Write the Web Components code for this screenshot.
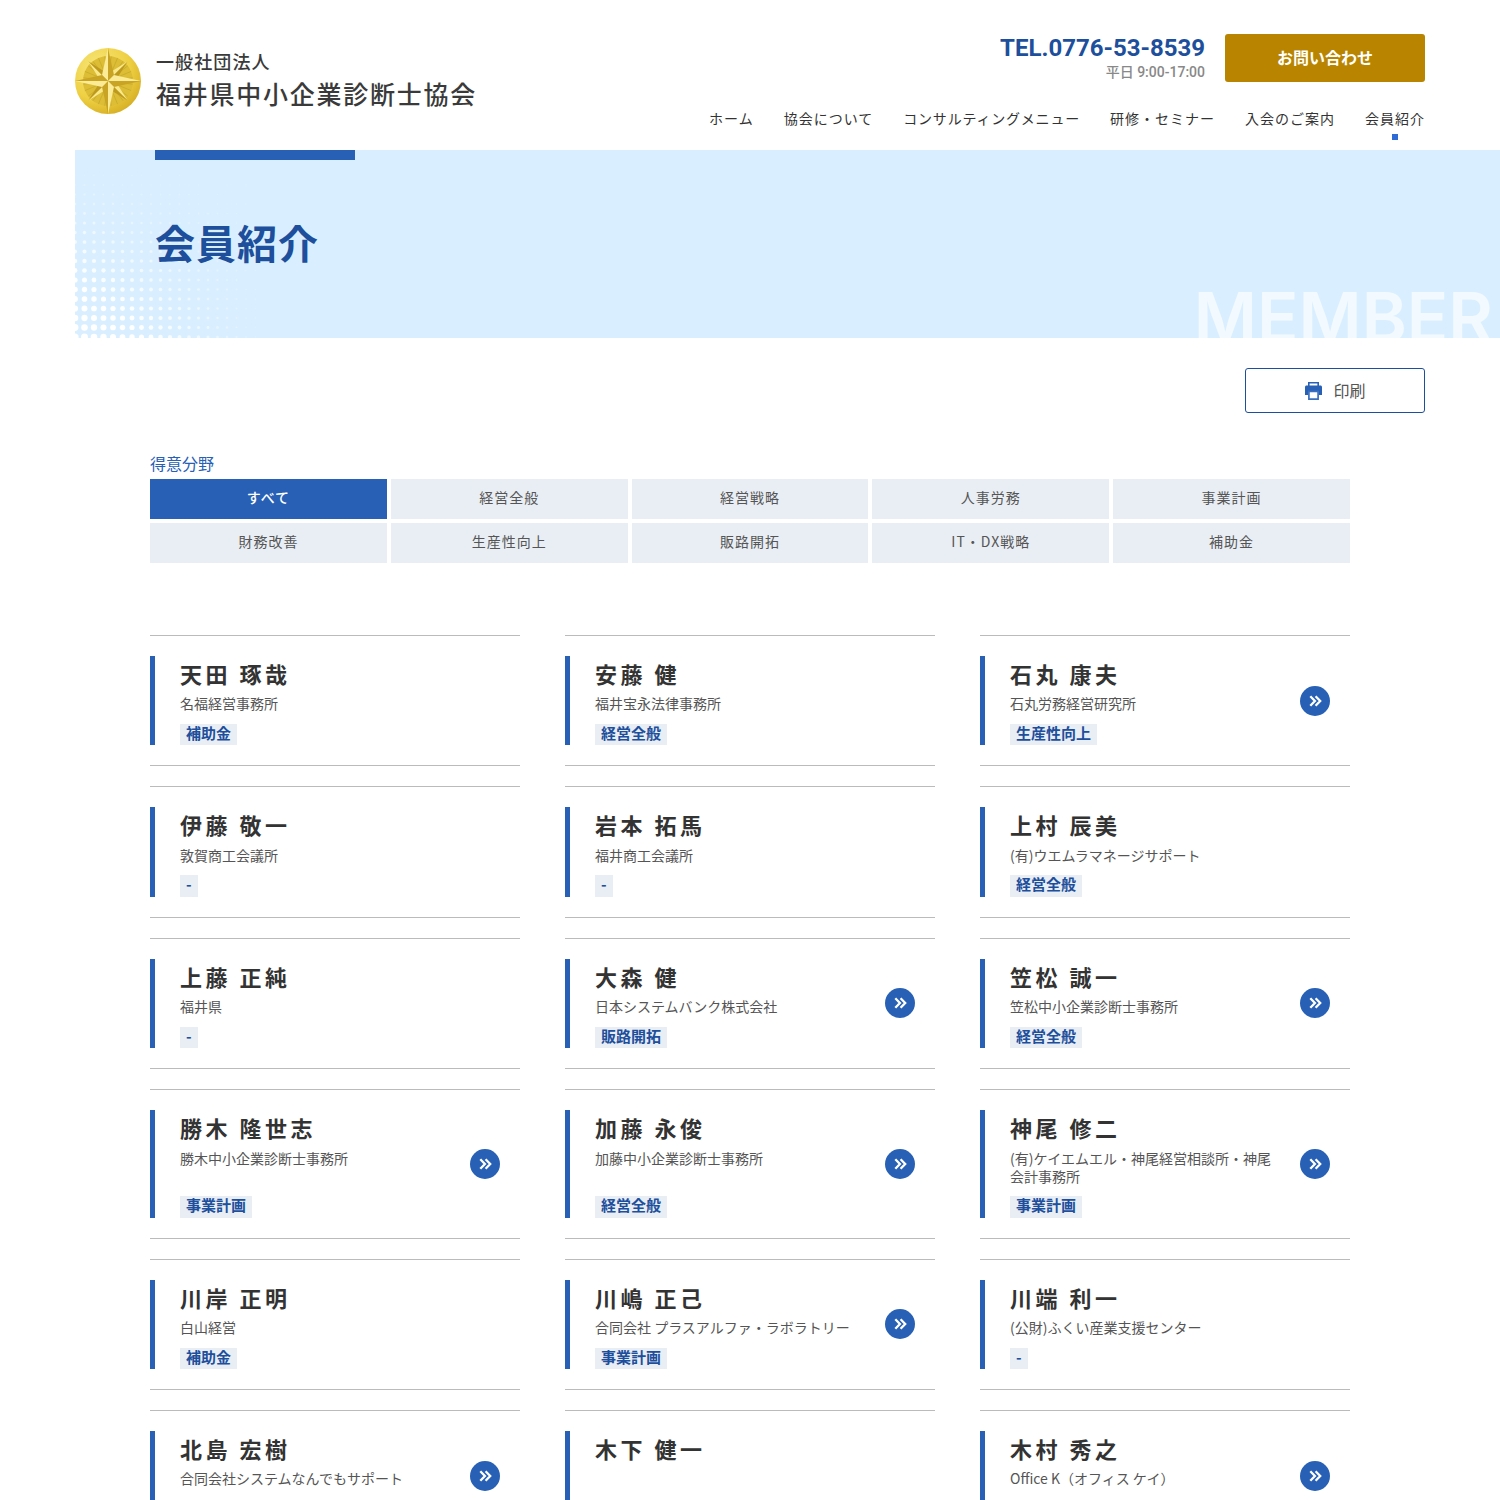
<!DOCTYPE html>
<html lang="ja">
<head>
<meta charset="utf-8">
<title>会員紹介</title>
<style>
  html, body { margin: 0; height: 1500px; overflow: hidden; background: #fff; }
  body { font-family: "Noto Sans CJK JP", sans-serif; color: #333; }
</style>
</head>
<body>
<site-header>
  <nav-link>ホーム</nav-link>
  <nav-link>協会について</nav-link>
  <nav-link style="letter-spacing:.8px">コンサルティングメニュー</nav-link>
  <nav-link>研修・セミナー</nav-link>
  <nav-link>入会のご案内</nav-link>
  <nav-link active>会員紹介</nav-link>
</site-header>
<page-hero sub="MEMBER">会員紹介</page-hero>
<print-button>印刷</print-button>
<filter-tabs label="得意分野">
  <filter-tab active>すべて</filter-tab>
  <filter-tab>経営全般</filter-tab>
  <filter-tab>経営戦略</filter-tab>
  <filter-tab>人事労務</filter-tab>
  <filter-tab>事業計画</filter-tab>
  <filter-tab>財務改善</filter-tab>
  <filter-tab>生産性向上</filter-tab>
  <filter-tab>販路開拓</filter-tab>
  <filter-tab>IT・DX戦略</filter-tab>
  <filter-tab>補助金</filter-tab>
</filter-tabs>
<member-list>
  <member-card><span slot="name">天田 琢哉</span>名福経営事務所<span slot="tag">補助金</span></member-card>
  <member-card><span slot="name">安藤 健</span>福井宝永法律事務所<span slot="tag">経営全般</span></member-card>
  <member-card link><span slot="name">石丸 康夫</span>石丸労務経営研究所<span slot="tag">生産性向上</span></member-card>
  <member-card><span slot="name">伊藤 敬一</span>敦賀商工会議所<span slot="tag">-</span></member-card>
  <member-card><span slot="name">岩本 拓馬</span>福井商工会議所<span slot="tag">-</span></member-card>
  <member-card><span slot="name">上村 辰美</span>(有)ウエムラマネージサポート<span slot="tag">経営全般</span></member-card>
  <member-card><span slot="name">上藤 正純</span>福井県<span slot="tag">-</span></member-card>
  <member-card link><span slot="name">大森 健</span>日本システムバンク株式会社<span slot="tag">販路開拓</span></member-card>
  <member-card link><span slot="name">笠松 誠一</span>笠松中小企業診断士事務所<span slot="tag">経営全般</span></member-card>
  <member-card link><span slot="name">勝木 隆世志</span>勝木中小企業診断士事務所<span slot="tag">事業計画</span></member-card>
  <member-card link><span slot="name">加藤 永俊</span>加藤中小企業診断士事務所<span slot="tag">経営全般</span></member-card>
  <member-card link><span slot="name">神尾 修二</span>(有)ケイエムエル・神尾経営相談所・神尾会計事務所<span slot="tag">事業計画</span></member-card>
  <member-card><span slot="name">川岸 正明</span>白山経営<span slot="tag">補助金</span></member-card>
  <member-card link><span slot="name">川嶋 正己</span>合同会社 プラスアルファ・ラボラトリー<span slot="tag">事業計画</span></member-card>
  <member-card><span slot="name">川端 利一</span>(公財)ふくい産業支援センター<span slot="tag">-</span></member-card>
  <member-card link><span slot="name">北島 宏樹</span>合同会社システムなんでもサポート</member-card>
  <member-card><span slot="name">木下 健一</span></member-card>
  <member-card link><span slot="name">木村 秀之</span>Office K（オフィス ケイ）</member-card>
</member-list>

<script>
// base para todos: shadow abierto + template con estilos
class BaseElement extends HTMLElement {
  constructor () {
    super();
    this.attachShadow({ mode: "open" });
  }
  getStyles () { return ""; }
  getMarkup () { return "<slot></slot>"; }
  render () {
    const template = document.createElement("template");
    template.innerHTML = `<style>${this.getStyles()}</style>${this.getMarkup()}`;
    this.shadowRoot.appendChild(template.content.cloneNode(true));
  }
  connectedCallback () { this.render(); }
}

class SiteLogo extends BaseElement {
  getStyles () {
    return `
      :host { display: block; width: 66px; height: 66px; }
      svg { display: block; }
    `;
  }
  getMarkup () {
    // estrella de 8 puntas, cada punta mitad clara / mitad oscura
    let rays = "";
    for (let i = 0; i < 24; i++) {
      rays += `<line x1="33" y1="33" x2="33" y2="8" stroke="#9c8016" stroke-width=".6" opacity=".35" transform="rotate(${i * 15 + 7.5} 33 33)"/>`;
    }
    let short = "";
    [45, 135, 225, 315].forEach(a => {
      short += `<g transform="rotate(${a} 33 33)"><polygon points="33,5 33,33 28,27" fill="#f9e88a"/><polygon points="33,5 33,33 38,27" fill="#bd9a1f"/></g>`;
    });
    let long = "";
    [0, 90, 180, 270].forEach(a => {
      long += `<g transform="rotate(${a} 33 33)"><polygon points="33,0 33,33 27,27" fill="#fbeb96"/><polygon points="33,0 33,33 39,27" fill="#c9a424"/></g>`;
    });
    return `
      <svg width="66" height="66" viewBox="0 0 66 66">
        <defs>
          <radialGradient id="g" cx=".35" cy=".3" r=".8">
            <stop offset="0" stop-color="#f7e77c"/>
            <stop offset=".6" stop-color="#efd043"/>
            <stop offset="1" stop-color="#d2a91f"/>
          </radialGradient>
        </defs>
        <circle cx="33" cy="33" r="33" fill="url(#g)"/>
        <circle cx="33" cy="33" r="25" fill="#dcbd35"/>
        ${rays}${short}${long}
      </svg>
    `;
  }
}

class NavLink extends BaseElement {
  getStyles () {
    return `
      :host { display: block; position: relative; font-size: 14px; line-height: 20px; letter-spacing: 1px; color: #333; white-space: nowrap; }
      :host([active])::after { content: ""; position: absolute; left: 50%; bottom: -12px; width: 6px; height: 6px; margin-left: -3px; background: #2f6bd6; }
    `;
  }
}

class SiteHeader extends BaseElement {
  getStyles () {
    return `
      :host { display: flex; justify-content: space-between; box-sizing: border-box; height: 150px; padding: 0 75px; }
      .brand { display: flex; gap: 15px; padding-top: 48px; align-items: flex-start; }
      .brand-text { color: #3a3a3a; white-space: nowrap; font-weight: 500; margin-top: -1px; }
      .corp { font-size: 18px; line-height: 28px; letter-spacing: 1.1px; }
      .org { font-size: 25px; line-height: 36px; letter-spacing: 1.75px; }
      .side { display: flex; flex-direction: column; align-items: flex-end; padding-top: 34px; }
      .contact { display: flex; gap: 20px; }
      .tel { text-align: right; font-family: Roboto, "Noto Sans CJK JP", sans-serif; }
      .num { font-size: 24px; line-height: 28px; margin-bottom: 2px; font-weight: 700; color: #1d4f9c; white-space: nowrap; }
      .hours { font-size: 14px; line-height: 16px; color: #888; font-weight: 500; }
      .mail { display: flex; align-items: center; justify-content: center; box-sizing: border-box; width: 200px; height: 48px; padding-bottom: 2px; border-radius: 3px; background: #b98500; color: #fff; font-size: 16px; line-height: 24px; font-weight: 700; }
      nav { display: flex; gap: 30px; margin-top: 26px; }
    `;
  }
  getMarkup () {
    return `
      <div class="brand">
        <site-logo></site-logo>
        <div class="brand-text">
          <div class="corp">一般社団法人</div>
          <div class="org">福井県中小企業診断士協会</div>
        </div>
      </div>
      <div class="side">
        <div class="contact">
          <div class="tel">
            <div class="num">TEL.0776-53-8539</div>
            <div class="hours">平日 9:00-17:00</div>
          </div>
          <div class="mail">お問い合わせ</div>
        </div>
        <nav><slot></slot></nav>
      </div>
    `;
  }
}

class PageHero extends BaseElement {
  getStyles () {
    return `
      :host { display: block; position: relative; overflow: hidden; box-sizing: border-box; height: 188px; margin-left: 75px; padding: 63px 0 0 80px; background: #d9efff; }
      .bar { position: absolute; left: 80px; top: 0; width: 200px; height: 10px; background: #2760b5; }
      svg { position: absolute; left: 0; top: 0; }
      h1 { position: relative; margin: 0; font-size: 40px; line-height: 58px; font-weight: 700; letter-spacing: 1px; color: #1d4f9c; }
      .sub { position: absolute; right: 7px; top: 126px; font-family: Inter, Roboto, sans-serif; font-size: 68.5px; line-height: 84px; font-weight: 600; color: rgba(255,255,255,.65); white-space: nowrap; }
    `;
  }
  getDots () {
    let dots = "";
    for (let i = 0; i < 20; i++) {
      for (let j = 0; j < 18; j++) {
        const x = i * 9.5, y = 187 - j * 9.5;
        const k = (1 - i / 20) * (1 - j / 18);
        const r = 0.6 + 3 * k;
        dots += `<circle cx="${x}" cy="${y}" r="${r.toFixed(2)}" fill="#fff" opacity="${Math.min(1, 0.08 + k * 1.4).toFixed(2)}"/>`;
      }
    }
    return `<svg width="200" height="188">${dots}</svg>`;
  }
  getMarkup () {
    return `
      ${this.getDots()}
      <div class="bar"></div>
      <h1><slot></slot></h1>
      <div class="sub">${this.getAttribute("sub")}</div>
    `;
  }
}

class PrintButton extends BaseElement {
  getStyles () {
    return `
      :host { display: flex; align-items: center; justify-content: center; gap: 11px; box-sizing: border-box; width: 180px; height: 45px; margin: 30px 75px 0 auto; padding-left: 1px; border: 1px solid #1d4f9c; border-radius: 3px; font-size: 16px; line-height: 24px; color: #555; }
      svg { display: block; }
      .label { padding-bottom: 2px; }
    `;
  }
  getMarkup () {
    return `
      <svg width="17" height="18" viewBox="0 0 17 18">
        <path fill="none" stroke="#2760b5" stroke-width="1.6" d="M3.8 4V.8h9.4V4"/>
        <path fill="#2760b5" d="M1.5 3.4h14c.8 0 1.5.7 1.5 1.5V13h-3.2v-3.2H3.2V13H0V4.9c0-.8.7-1.5 1.5-1.5z"/>
        <path fill="none" stroke="#3a6fc0" stroke-width="1.7" d="M3.9 9.3h9.2v7.8H3.9z"/>
      </svg>
      <div class="label"><slot></slot></div>
    `;
  }
}

class FilterTab extends BaseElement {
  getStyles () {
    return `
      :host { display: flex; align-items: center; justify-content: center; box-sizing: border-box; height: 40px; padding-bottom: 4px; background: #e9eef4; color: #555; font-size: 14px; line-height: 20px; letter-spacing: 1px; }
      :host([active]) { background: #2760b5; color: #fff; font-weight: 500; }
    `;
  }
}

class FilterTabs extends BaseElement {
  getStyles () {
    return `
      :host { display: block; margin: 40px 150px 0; }
      .label { font-size: 16px; line-height: 20px; color: #2760b5; margin-bottom: 6px; }
      .grid { display: grid; grid-template-columns: repeat(5, 1fr); gap: 4px; }
    `;
  }
  getMarkup () {
    return `
      <div class="label">${this.getAttribute("label")}</div>
      <div class="grid"><slot></slot></div>
    `;
  }
}

class MemberCard extends BaseElement {
  getStyles () {
    return `
      :host { display: block; box-sizing: border-box; padding: 20px 0; border-top: 1px solid #bbb; border-bottom: 1px solid #bbb; }
      .inner { display: flex; flex-direction: column; position: relative; box-sizing: border-box; height: 100%; border-left: 5px solid #2760b5; padding: 0 70px 0 25px; }
      .name { font-size: 22px; line-height: 34px; padding-bottom: 4px; font-weight: 700; letter-spacing: 3.5px; color: #333; }
      .company { min-height: 18px; margin-top: .4px; font-size: 14px; line-height: 18px; color: #555; }
      .tag { align-self: flex-start; margin-top: auto; padding: 0 6px 3px; background: #e9eef4; font-size: 15px; line-height: 18.4px; font-weight: 700; color: #1d4f9c; }
      .spacer { height: 11.6px; flex: none; }
      .go { position: absolute; right: 20px; top: 50%; width: 30px; height: 30px; margin-top: -15px; border-radius: 50%; background: #2760b5; }
      .go svg { display: block; }
    `;
  }
  getMarkup () {
    const go = this.hasAttribute("link") ? `
      <div class="go">
        <svg width="30" height="30" viewBox="0 0 30 30" fill="none" stroke="#fff" stroke-width="2.3">
          <path d="M10.3 10.3l4.6 4.7-4.6 4.7M15.6 10.3l4.6 4.7-4.6 4.7"/>
        </svg>
      </div>` : "";
    const tag = this.querySelector('[slot="tag"]') ? `<div class="tag"><slot name="tag"></slot></div>` : `<div style="height:21.4px"></div>`;
    return `
      <div class="inner">
        <div class="name"><slot name="name"></slot></div>
        <div class="company"><slot></slot></div>
        <div class="spacer"></div>
        ${tag}
        ${go}
      </div>
    `;
  }
}

class MemberList extends BaseElement {
  getStyles () {
    return `
      :host { display: grid; grid-template-columns: repeat(3, 370px); column-gap: 45px; row-gap: 20px; margin: 72px 150px 0; }
    `;
  }
}

customElements.define("site-logo", SiteLogo);
customElements.define("nav-link", NavLink);
customElements.define("site-header", SiteHeader);
customElements.define("page-hero", PageHero);
customElements.define("print-button", PrintButton);
customElements.define("filter-tab", FilterTab);
customElements.define("filter-tabs", FilterTabs);
customElements.define("member-card", MemberCard);
customElements.define("member-list", MemberList);
</script>
</body>
</html>
